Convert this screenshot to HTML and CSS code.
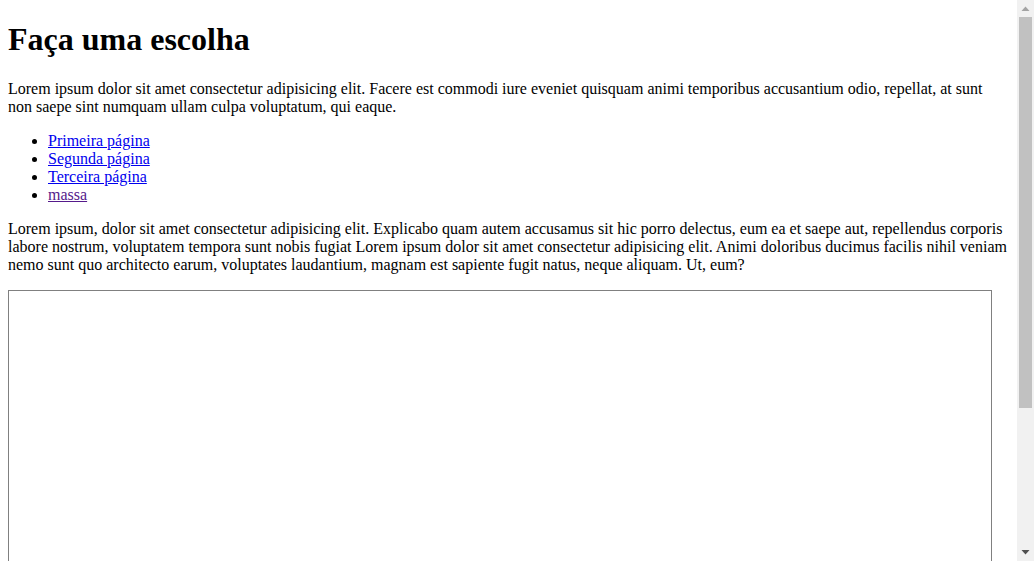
FILE: index.html
```html
<!DOCTYPE html>
<html lang="pt">
<head>
<meta charset="utf-8">
<title>Faça uma escolha</title>
<link rel="stylesheet" href="styles.css">
</head>
<body>
<h1>Faça uma escolha</h1>
<p>Lorem ipsum dolor sit amet consectetur adipisicing elit. Facere est commodi iure eveniet quisquam animi temporibus accusantium odio, repellat, at sunt non saepe sint numquam ullam culpa voluptatum, qui eaque.</p>
<ul>
<li><a class="link" href="#p1">Primeira página</a></li>
<li><a class="link" href="#p2">Segunda página</a></li>
<li><a class="link" href="#p3">Terceira página</a></li>
<li><a class="link visited" href="#m">massa</a></li>
</ul>
<p>Lorem ipsum, dolor sit amet consectetur adipisicing elit. Explicabo quam autem accusamus sit hic porro delectus, eum ea et saepe aut, repellendus corporis labore nostrum, voluptatem tempora sunt nobis fugiat Lorem ipsum dolor sit amet consectetur adipisicing elit. Animi doloribus ducimus facilis nihil veniam nemo sunt quo architecto earum, voluptates laudantium, magnam est sapiente fugit natus, neque aliquam. Ut, eum?</p>
<div class="frame"></div>
<div class="scrollbar" aria-hidden="true">
  <svg class="arrow arrow-up" width="17" height="17" viewBox="0 0 17 17"><polygon points="4.5,11 12.5,11 8.5,6.5" fill="#a3a3a3"/></svg>
  <div class="thumb"></div>
  <svg class="arrow arrow-down" width="17" height="17" viewBox="0 0 17 17"><polygon points="4.5,6 12.5,6 8.5,10.5" fill="#505050"/></svg>
</div>
</body>
</html>
```
FILE: styles.css
```css
html {
  overflow: hidden;
}
body {
  margin: 8px 25px 8px 8px;
  font-family: "Liberation Serif", "Times New Roman", serif;
  font-size: 16px;
  color: #000;
  background: #fff;
}
h1 {
  font-size: 2em;
  margin: 13.44px 0 21.44px;
}
.link {
  color: #0000ee;
}
.link.visited {
  color: #551a8b;
}
.frame {
  display: inline-block;
  width: 982px;
  height: 452px;
  border: 1px solid #808080;
  vertical-align: baseline;
}
.scrollbar {
  position: fixed;
  top: 0;
  right: 0;
  width: 17px;
  height: 100%;
  background: #f1f1f1;
  display: flex;
  flex-direction: column;
}
.arrow {
  display: block;
  flex: none;
}
.thumb {
  flex: none;
  margin: 0 2px;
  height: 391px;
  background: #c1c1c1;
}
.arrow-down {
  margin-top: auto;
}
```
